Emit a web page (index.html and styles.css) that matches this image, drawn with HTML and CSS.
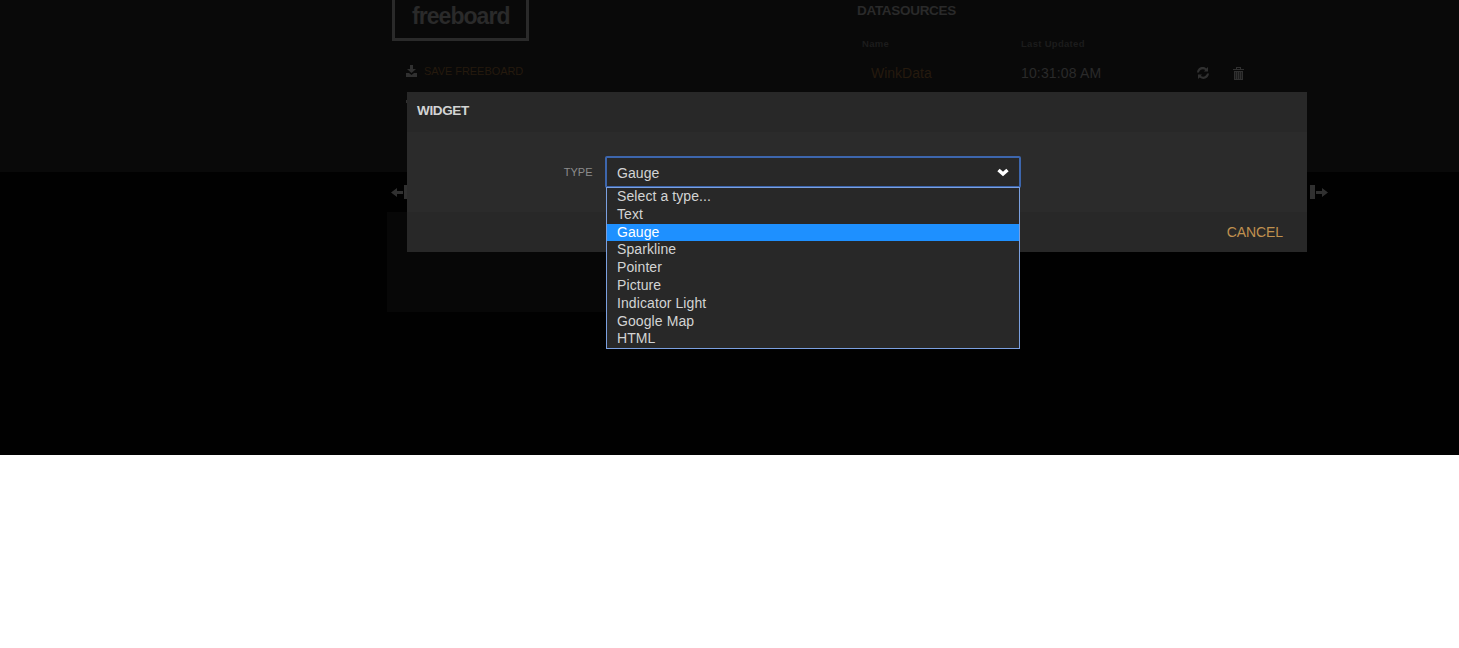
FILE: index.html
```html
<!DOCTYPE html>
<html lang="en">
<head>
<meta charset="utf-8">
<title>freeboard</title>
<link rel="stylesheet" href="styles.css">
</head>
<body>
<div class="app">
  <header class="admin-bar">
    <div class="board-tools">
      <h1 class="logo">freeboard</h1>
      <div class="tool save">
        <svg width="12" height="12" viewBox="0 0 12 12"><path d="M4 0h3v4h3L5.500 8 1 4h3zM0 8h3l2.500 2L8 8h3v4H0z"/></svg>
        <span>SAVE FREEBOARD</span>
      </div>
      <div class="tool more"><i class="tick"></i></div>
    </div>
    <section class="datasources">
      <h2>DATASOURCES</h2>
      <div class="row head"><span>Name</span><span>Last Updated</span></div>
      <div class="row data">
        <a class="source">WinkData</a><span class="time">10:31:08 AM</span>
        <svg class="refresh" width="12" height="12" viewBox="0 0 12 12"><path d="M0 5.500C.500.200 6-1.300 9.300 1.500L11 0v4.500H7L8.200 3C5.800 1.600 2.700 2.500 2 5.500zM12 6.500c-.5 5.300-6 6.800-9.300 4L1 12V7.500h4L3.800 9C6.200 10.400 9.300 9.500 10 6.500z"/></svg>
        <svg class="trash" width="11" height="13" viewBox="0 0 11 13"><path fill-rule="evenodd" d="M0 2h3V0h5v2h3v1H0zM4 1v1h3V1zM1 4h9v9H1zM2.500 5v7h.5V5zM4.500 5v7h.5V5zM6.200 5v7h.5V5zM8 5v7h.5V5z"/></svg>
      </div>
    </section>
  </header>
  <main class="board">
    <div class="handles">
      <svg width="18" height="14" viewBox="0 0 18 14"><path d="M0 7.500L6 3v3h6v3H6v3zM13 0h5v14h-5z"/></svg>
      <svg width="18" height="14" viewBox="0 0 18 14"><path d="M0 0h5v14H0zM6 6h6V3l6 4.500-6 4.500V9H6z"/></svg>
    </div>
    <div class="pane"></div>
  </main>
</div>
<div class="modal">
  <header class="modal-title">WIDGET</header>
  <div class="modal-body">
    <label>TYPE</label>
    <div class="select">
      <span>Gauge</span>
      <svg width="12" height="9" viewBox="0 0 12 9"><path d="M1.500 2L6 6l4.500-4" fill="none" stroke="#fff" stroke-width="3.500"/></svg>
      <ul class="options">
        <li>Select a type...</li>
        <li>Text</li>
        <li class="selected">Gauge</li>
        <li>Sparkline</li>
        <li>Pointer</li>
        <li>Picture</li>
        <li>Indicator Light</li>
        <li>Google Map</li>
        <li>HTML</li>
      </ul>
    </div>
  </div>
  <footer class="modal-footer">CANCEL</footer>
</div>
</body>
</html>
```
FILE: styles.css
```css
* { box-sizing: border-box; }
body {
  margin: 0;
  background: #fff;
  font-family: "Liberation Sans", Arial, sans-serif;
  font-size: 14px;
  color: #2a2a2a;
}
h1, h2, ul { margin: 0; padding: 0; }
svg { display: block; fill: #303030; }
.app { height: 455px; background: #010101; overflow: hidden; }
.admin-bar {
  display: flex;
  height: 172px;
  padding-left: 392px;
  background: #090909;
}
.board-tools { width: 465px; }
.logo {
  width: 137px;
  height: 41px;
  border: 3px solid #2a2a2a;
  border-top: 0;
  padding-left: 17px;
  font-size: 23px;
  line-height: 32px;
  letter-spacing: -0.95px;
}
.tool {
  display: flex;
  align-items: center;
  gap: 6px;
  height: 30px;
  padding-left: 14px;
  font-size: 11px;
  letter-spacing: -0.06px;
  color: #251a0e;
}
.save { margin-top: 15px; }
.tick { width: 4px; height: 3px; background: #303030; }
.datasources h2 {
  font-size: 13.5px;
  line-height: 16px;
  letter-spacing: -0.3px;
  padding-top: 3px;
  height: 34px;
}
.row {
  display: grid;
  grid-template-columns: 159px 176px 36px 12px;
  align-items: center;
  padding-left: 5px;
}
.head {
  height: 18px;
  font-size: 9.5px;
  font-weight: bold;
  letter-spacing: 0.3px;
  color: #1c1c1c;
}
.data { height: 42px; }
.source { padding-left: 9px; color: #251a0e; }
.time { letter-spacing: 0.15px; }
.handles {
  display: flex;
  justify-content: space-between;
  width: 937px;
  height: 40px;
  margin-left: 391px;
  padding-top: 13px;
}
.pane { width: 300px; height: 100px; margin-left: 387px; background: #070707; }
.modal {
  position: absolute;
  top: 92px;
  left: 407px;
  width: 900px;
  height: 160px;
  background: #282828;
  color: #d3d4d4;
}
.modal-title {
  height: 40px;
  padding-left: 10px;
  font-size: 13.5px;
  font-weight: bold;
  line-height: 38px;
  letter-spacing: -0.35px;
}
.modal-body {
  display: flex;
  height: 80px;
  padding-top: 24px;
  background: #2b2b2b;
}
.modal-body label {
  width: 198px;
  padding-right: 12.5px;
  text-align: right;
  font-size: 11px;
  line-height: 32px;
  color: #8b8b8b;
}
.select {
  position: relative;
  display: flex;
  align-items: center;
  justify-content: space-between;
  width: 416px;
  height: 32px;
  padding: 0 10px;
  border: 2px solid #3d66ad;
  border-radius: 2px;
  background: #282828;
  letter-spacing: 0.09px;
}
.select > span { padding-top: 2px; }
.options {
  position: absolute;
  top: 29px;
  left: -1px;
  width: 414px;
  height: 162px;
  border: 1px solid #7ba0e0;
  background: #282828;
  list-style: none;
}
.options li { height: 17.8px; padding-left: 10px; line-height: 17.8px; }
.options .selected { background: #1e90ff; color: #fff; }
.modal-footer {
  height: 40px;
  padding-right: 24px;
  text-align: right;
  line-height: 40px;
  letter-spacing: -0.1px;
  color: #c0914f;
}
```
